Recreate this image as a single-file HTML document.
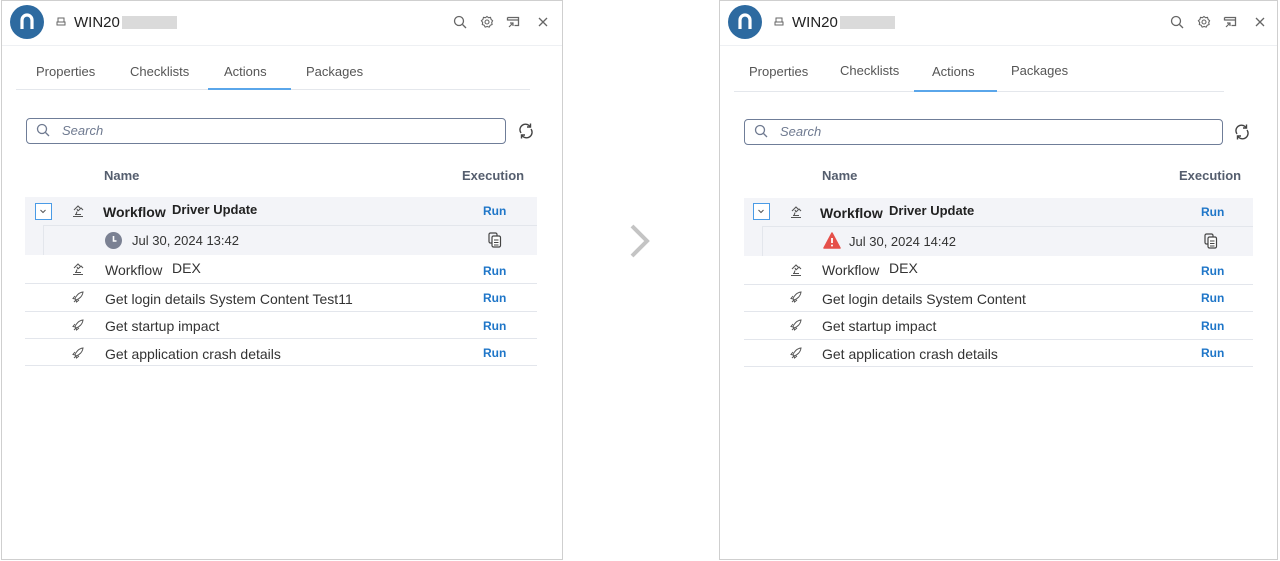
<!DOCTYPE html><html><head><style>
body{margin:0;width:1280px;height:561px;background:#fff;position:relative;overflow:hidden;font-family:"Liberation Sans",sans-serif;}
.p{position:absolute;top:0;width:559px;height:558px;border:1px solid #cfcfcf;background:#fff;}
.a{position:absolute;white-space:nowrap;}
.tab{font-size:13px;color:#555;top:63px}
.run{color:#1f76c8;font-weight:bold;font-size:12px;left:481px}
.row{font-size:14px;color:#333}
.sep{position:absolute;left:23px;width:512px;height:1px;background:#e3e6ec}
svg{position:absolute}
</style></head><body>

<!-- LEFT PANEL -->
<div class="p" style="left:1px;width:560px">
 <div class="a" style="left:8px;top:4px;width:34px;height:34px;border-radius:50%;background:#2d6aa0"></div>
 <svg style="left:14px;top:10px" width="22" height="22" viewBox="0 0 22 22"><path d="M6 18V9a5 5 0 0 1 10 0v9" fill="none" stroke="#fff" stroke-width="3.2"/></svg>
 <svg style="left:54px;top:16px" width="10" height="10" viewBox="0 0 10 10"><rect x="2" y="1" width="6" height="4" fill="none" stroke="#666"/><rect x="1" y="5" width="8" height="3" fill="none" stroke="#666"/></svg>
 <div class="a" style="left:72px;top:13px;font-size:15px;color:#222">WIN20</div>
 <div class="a" style="left:120px;top:15px;width:55px;height:13px;background:#dadada"></div>
 <svg style="left:451px;top:14px" width="14" height="14" viewBox="0 0 14 14"><circle cx="6" cy="6" r="4.5" fill="none" stroke="#666" stroke-width="1.3"/><path d="M9.5 9.5L13 13" stroke="#666" stroke-width="1.3"/></svg>
 <svg style="left:478px;top:14px" width="14" height="14" viewBox="0 0 14 14"><path d="M7 1.5l1.5 1.2 2-.3.6 2 1.5 1.3-.9 1.8.4 2-1.9.8-1 1.8-2-.6-2 .6-1-1.8-1.9-.8.4-2L1.4 5.7 2.9 4.4l.6-2 2 .3z" fill="none" stroke="#666" stroke-width="1.1"/><circle cx="7" cy="7" r="2" fill="none" stroke="#666" stroke-width="1.1"/></svg>
 <svg style="left:504px;top:14px" width="14" height="14" viewBox="0 0 14 14"><path d="M1.5 2.5h11v8h-4M1.5 2.5v3M1.5 5h11" fill="none" stroke="#666" stroke-width="1.3"/><path d="M3 12l4-4M4 8h3v3" fill="none" stroke="#666" stroke-width="1.2"/></svg>
 <svg style="left:535px;top:15px" width="12" height="12" viewBox="0 0 12 12"><path d="M2 2l8 8M10 2l-8 8" stroke="#666" stroke-width="1.3"/></svg>
 <div class="a" style="left:0;top:44px;width:560px;height:1px;background:#eef0f3"></div>
 <div class="a tab" style="left:34px">Properties</div>
 <div class="a tab" style="left:128px">Checklists</div>
 <div class="a tab" style="left:222px">Actions</div>
 <div class="a tab" style="left:304px">Packages</div>
 <div class="a" style="left:14px;top:88px;width:514px;height:1px;background:#e4e7ec"></div>
 <div class="a" style="left:206px;top:87px;width:83px;height:2px;background:#5aa6ea"></div>
 <div class="a" style="left:24px;top:117px;width:478px;height:24px;border:1px solid #6f7d98;border-radius:4px"></div>
 <svg style="left:34px;top:122px" width="14" height="14" viewBox="0 0 14 14"><circle cx="6" cy="6" r="4.5" fill="none" stroke="#6f7a90" stroke-width="1.3"/><path d="M9.5 9.5L13 13" stroke="#6f7a90" stroke-width="1.3"/></svg>
 <div class="a" style="left:60px;top:122px;font-size:13px;font-style:italic;color:#6f7a90">Search</div>
 <svg style="left:515px;top:121px" width="18" height="18" viewBox="0 0 18 18"><path d="M4 11a5.5 5.5 0 0 1 9-6.5M14 7a5.5 5.5 0 0 1-9 6.5" fill="none" stroke="#444" stroke-width="1.4"/><path d="M13.5 1.5v3.5h-3.5M4.5 16.5v-3.5h3.5" fill="none" stroke="#444" stroke-width="1.4"/></svg>
 <div class="a" style="left:102px;top:167px;font-size:13px;font-weight:bold;color:#555e6e">Name</div>
 <div class="a" style="left:460px;top:167px;font-size:13px;font-weight:bold;color:#555e6e">Execution</div>
 <div class="a" style="left:23px;top:196px;width:512px;height:58px;background:#f3f4f8"></div>
 <div class="a" style="left:41px;top:224px;width:494px;height:1px;background:#e3e6ec"></div>
 <div class="a" style="left:41px;top:224px;width:1px;height:30px;background:#e3e6ec"></div>
 <div class="a" style="left:33px;top:202px;width:15px;height:15px;border:1px solid #4a9be6;background:#fff"></div>
 <svg style="left:36px;top:205px" width="10" height="10" viewBox="0 0 10 10"><path d="M2.5 4l2.5 2.5L7.5 4" fill="none" stroke="#555" stroke-width="1"/></svg>
 <svg style="left:69px;top:203px" width="14" height="14" viewBox="0 0 14 14"><path d="M2 12.5h10M4 10.5h6M5 10.5l1-3M3 6l4-4 2 2M7 7l3-3 2 2M6 5l1 2" fill="none" stroke="#555" stroke-width="1.1"/></svg>
 <div class="a" style="left:101px;top:203px;font-size:14px;font-weight:bold;color:#222">Workflow</div>
 <div class="a" style="left:170px;top:201px;font-size:13px;font-weight:bold;color:#222">Driver Update</div>
 <div class="a run" style="top:203px">Run</div>
 <div class="a" style="left:103px;top:231px;width:17px;height:17px;border-radius:50%;background:#7b8193"></div>
 <svg style="left:103px;top:231px" width="17" height="17" viewBox="0 0 17 17"><path d="M8.5 4v5h3" fill="none" stroke="#fff" stroke-width="1.6"/></svg>
 <div class="a" style="left:130px;top:232px;font-size:13px;color:#333">Jul 30, 2024 13:42</div>
 <svg style="left:486px;top:231px" width="14" height="16" viewBox="0 0 14 16"><rect x="1" y="1" width="8" height="10" rx="1.5" fill="none" stroke="#444" stroke-width="1.2"/><rect x="4" y="4" width="8.5" height="11" rx="1.5" fill="#fff" stroke="#444" stroke-width="1.2"/><path d="M6 8h4.5M6 10.5h4.5M6 13h4.5" stroke="#444" stroke-width="1"/></svg>
 <svg style="left:69px;top:261px" width="14" height="14" viewBox="0 0 14 14"><path d="M2 12.5h10M4 10.5h6M5 10.5l1-3M3 6l4-4 2 2M7 7l3-3 2 2M6 5l1 2" fill="none" stroke="#555" stroke-width="1.1"/></svg>
 <div class="a row" style="left:103px;top:261px">Workflow</div>
 <div class="a row" style="left:170px;top:259px">DEX</div>
 <div class="a run" style="top:263px">Run</div>
 <div class="sep" style="top:282px"></div>
 <svg style="left:70px;top:290px" width="12" height="12" viewBox="0 0 12 12"><path d="M11 1C7 1.5 4 4.5 3 8l1 1c3.5-1 6.5-4 7-8zM3 8L1 7.5 3 5M4 9l.5 2L7 9M2 11l2-2" fill="none" stroke="#555" stroke-width="1"/></svg>
 <div class="a row" style="left:103px;top:290px">Get login details System Content Test11</div>
 <div class="a run" style="top:290px">Run</div>
 <div class="sep" style="top:310px"></div>
 <svg style="left:70px;top:318px" width="12" height="12" viewBox="0 0 12 12"><path d="M11 1C7 1.5 4 4.5 3 8l1 1c3.5-1 6.5-4 7-8zM3 8L1 7.5 3 5M4 9l.5 2L7 9M2 11l2-2" fill="none" stroke="#555" stroke-width="1"/></svg>
 <div class="a row" style="left:103px;top:317px">Get startup impact</div>
 <div class="a run" style="top:318px">Run</div>
 <div class="sep" style="top:337px"></div>
 <svg style="left:70px;top:346px" width="12" height="12" viewBox="0 0 12 12"><path d="M11 1C7 1.5 4 4.5 3 8l1 1c3.5-1 6.5-4 7-8zM3 8L1 7.5 3 5M4 9l.5 2L7 9M2 11l2-2" fill="none" stroke="#555" stroke-width="1"/></svg>
 <div class="a row" style="left:103px;top:345px">Get application crash details</div>
 <div class="a run" style="top:345px">Run</div>
 <div class="sep" style="top:364px"></div>
</div>

<!-- ARROW -->
<svg style="left:628px;top:223px" width="26" height="36" viewBox="0 0 26 36"><path d="M4 3l15 15L4 33" fill="none" stroke="#c4c4c4" stroke-width="4"/></svg>

<!-- RIGHT PANEL -->
<div class="p" style="left:719px;width:557px">
 <div class="a" style="left:8px;top:4px;width:34px;height:34px;border-radius:50%;background:#2d6aa0"></div>
 <svg style="left:14px;top:10px" width="22" height="22" viewBox="0 0 22 22"><path d="M6 18V9a5 5 0 0 1 10 0v9" fill="none" stroke="#fff" stroke-width="3.2"/></svg>
 <svg style="left:54px;top:16px" width="10" height="10" viewBox="0 0 10 10"><rect x="2" y="1" width="6" height="4" fill="none" stroke="#666"/><rect x="1" y="5" width="8" height="3" fill="none" stroke="#666"/></svg>
 <div class="a" style="left:72px;top:13px;font-size:15px;color:#222">WIN20</div>
 <div class="a" style="left:120px;top:15px;width:55px;height:13px;background:#dadada"></div>
 <svg style="left:450px;top:14px" width="14" height="14" viewBox="0 0 14 14"><circle cx="6" cy="6" r="4.5" fill="none" stroke="#666" stroke-width="1.3"/><path d="M9.5 9.5L13 13" stroke="#666" stroke-width="1.3"/></svg>
 <svg style="left:477px;top:14px" width="14" height="14" viewBox="0 0 14 14"><path d="M7 1.5l1.5 1.2 2-.3.6 2 1.5 1.3-.9 1.8.4 2-1.9.8-1 1.8-2-.6-2 .6-1-1.8-1.9-.8.4-2L1.4 5.7 2.9 4.4l.6-2 2 .3z" fill="none" stroke="#666" stroke-width="1.1"/><circle cx="7" cy="7" r="2" fill="none" stroke="#666" stroke-width="1.1"/></svg>
 <svg style="left:503px;top:14px" width="14" height="14" viewBox="0 0 14 14"><path d="M1.5 2.5h11v8h-4M1.5 2.5v3M1.5 5h11" fill="none" stroke="#666" stroke-width="1.3"/><path d="M3 12l4-4M4 8h3v3" fill="none" stroke="#666" stroke-width="1.2"/></svg>
 <svg style="left:534px;top:15px" width="12" height="12" viewBox="0 0 12 12"><path d="M2 2l8 8M10 2l-8 8" stroke="#666" stroke-width="1.3"/></svg>
 <div class="a" style="left:0;top:44px;width:557px;height:1px;background:#eef0f3"></div>
 <div class="a tab" style="left:29px">Properties</div>
 <div class="a tab" style="left:120px;top:62px">Checklists</div>
 <div class="a tab" style="left:212px">Actions</div>
 <div class="a tab" style="left:291px;top:62px">Packages</div>
 <div class="a" style="left:14px;top:90px;width:490px;height:1px;background:#e4e7ec"></div>
 <div class="a" style="left:194px;top:89px;width:83px;height:2px;background:#5aa6ea"></div>
 <div class="a" style="left:24px;top:118px;width:477px;height:24px;border:1px solid #6f7d98;border-radius:4px"></div>
 <svg style="left:34px;top:123px" width="14" height="14" viewBox="0 0 14 14"><circle cx="6" cy="6" r="4.5" fill="none" stroke="#6f7a90" stroke-width="1.3"/><path d="M9.5 9.5L13 13" stroke="#6f7a90" stroke-width="1.3"/></svg>
 <div class="a" style="left:60px;top:123px;font-size:13px;font-style:italic;color:#6f7a90">Search</div>
 <svg style="left:513px;top:122px" width="18" height="18" viewBox="0 0 18 18"><path d="M4 11a5.5 5.5 0 0 1 9-6.5M14 7a5.5 5.5 0 0 1-9 6.5" fill="none" stroke="#444" stroke-width="1.4"/><path d="M13.5 1.5v3.5h-3.5M4.5 16.5v-3.5h3.5" fill="none" stroke="#444" stroke-width="1.4"/></svg>
 <div class="a" style="left:102px;top:167px;font-size:13px;font-weight:bold;color:#555e6e">Name</div>
 <div class="a" style="left:459px;top:167px;font-size:13px;font-weight:bold;color:#555e6e">Execution</div>
 <div class="a" style="left:24px;top:197px;width:509px;height:58px;background:#f3f4f8"></div>
 <div class="a" style="left:42px;top:225px;width:491px;height:1px;background:#e3e6ec"></div>
 <div class="a" style="left:42px;top:225px;width:1px;height:30px;background:#e3e6ec"></div>
 <div class="a" style="left:33px;top:202px;width:15px;height:15px;border:1px solid #4a9be6;background:#fff"></div>
 <svg style="left:36px;top:205px" width="10" height="10" viewBox="0 0 10 10"><path d="M2.5 4l2.5 2.5L7.5 4" fill="none" stroke="#555" stroke-width="1"/></svg>
 <svg style="left:69px;top:204px" width="14" height="14" viewBox="0 0 14 14"><path d="M2 12.5h10M4 10.5h6M5 10.5l1-3M3 6l4-4 2 2M7 7l3-3 2 2M6 5l1 2" fill="none" stroke="#555" stroke-width="1.1"/></svg>
 <div class="a" style="left:100px;top:204px;font-size:14px;font-weight:bold;color:#222">Workflow</div>
 <div class="a" style="left:169px;top:202px;font-size:13px;font-weight:bold;color:#222">Driver Update</div>
 <div class="a run" style="top:204px">Run</div>
 <svg style="left:103px;top:231px" width="18" height="17" viewBox="0 0 18 17"><path d="M9 1L17 16H1z" fill="#e5504a" stroke="#e5504a" stroke-linejoin="round" stroke-width="1.5"/><path d="M9 6v5" stroke="#fff" stroke-width="1.8"/><circle cx="9" cy="13.5" r="1" fill="#fff"/></svg>
 <div class="a" style="left:129px;top:233px;font-size:13px;color:#333">Jul 30, 2024 14:42</div>
 <svg style="left:484px;top:232px" width="14" height="16" viewBox="0 0 14 16"><rect x="1" y="1" width="8" height="10" rx="1.5" fill="none" stroke="#444" stroke-width="1.2"/><rect x="4" y="4" width="8.5" height="11" rx="1.5" fill="#fff" stroke="#444" stroke-width="1.2"/><path d="M6 8h4.5M6 10.5h4.5M6 13h4.5" stroke="#444" stroke-width="1"/></svg>
 <svg style="left:69px;top:262px" width="14" height="14" viewBox="0 0 14 14"><path d="M2 12.5h10M4 10.5h6M5 10.5l1-3M3 6l4-4 2 2M7 7l3-3 2 2M6 5l1 2" fill="none" stroke="#555" stroke-width="1.1"/></svg>
 <div class="a row" style="left:102px;top:261px">Workflow</div>
 <div class="a row" style="left:169px;top:259px">DEX</div>
 <div class="a run" style="top:263px">Run</div>
 <div class="sep" style="top:283px;left:24px;width:509px"></div>
 <svg style="left:70px;top:290px" width="12" height="12" viewBox="0 0 12 12"><path d="M11 1C7 1.5 4 4.5 3 8l1 1c3.5-1 6.5-4 7-8zM3 8L1 7.5 3 5M4 9l.5 2L7 9M2 11l2-2" fill="none" stroke="#555" stroke-width="1"/></svg>
 <div class="a row" style="left:102px;top:290px">Get login details System Content</div>
 <div class="a run" style="top:290px">Run</div>
 <div class="sep" style="top:310px;left:24px;width:509px"></div>
 <svg style="left:70px;top:318px" width="12" height="12" viewBox="0 0 12 12"><path d="M11 1C7 1.5 4 4.5 3 8l1 1c3.5-1 6.5-4 7-8zM3 8L1 7.5 3 5M4 9l.5 2L7 9M2 11l2-2" fill="none" stroke="#555" stroke-width="1"/></svg>
 <div class="a row" style="left:102px;top:317px">Get startup impact</div>
 <div class="a run" style="top:318px">Run</div>
 <div class="sep" style="top:338px;left:24px;width:509px"></div>
 <svg style="left:70px;top:346px" width="12" height="12" viewBox="0 0 12 12"><path d="M11 1C7 1.5 4 4.5 3 8l1 1c3.5-1 6.5-4 7-8zM3 8L1 7.5 3 5M4 9l.5 2L7 9M2 11l2-2" fill="none" stroke="#555" stroke-width="1"/></svg>
 <div class="a row" style="left:102px;top:345px">Get application crash details</div>
 <div class="a run" style="top:345px">Run</div>
 <div class="sep" style="top:365px;left:24px;width:509px"></div>
</div>
</body></html>
